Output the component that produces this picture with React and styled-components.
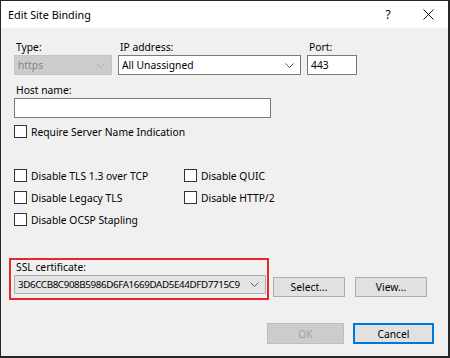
import React from 'react'
import styled, { createGlobalStyle } from 'styled-components'

const Global = createGlobalStyle`
body {
  margin: 0;
  background: #fff;
  font-family: "Noto Sans", "Liberation Sans", sans-serif;
}
`

const Window = styled.div`
width: 450px;
height: 358px;
box-sizing: border-box;
border: 1px solid #262626;
border-right-width: 2px;
border-bottom-width: 2px;
display: flex;
flex-direction: column;
background: #f0f0f0;
font-size: 10.3px;
color: #000;
`
const TitleBar = styled.div`
height: 27px;
flex: 0 0 27px;
background: #fff;
display: flex;
align-items: center;
padding-left: 7px;
font-size: 10.8px;
`
const Title = styled.div`
flex: 1;
`
const Caption = styled.div`
width: 40px;
height: 27px;
display: flex;
align-items: center;
justify-content: center;
font-size: 12px;
`
const Body = styled.div`
flex: 1;
padding: 12px 14px 0 13px;
display: flex;
flex-direction: column;
`
const TopRow = styled.div`
display: grid;
grid-template-columns: 98px 183px 50px;
column-gap: 6px;
`
const Field = styled.div`
display: flex;
flex-direction: column;
margin-top: ${p => p.$top || 0}px;
width: ${p => p.$w ? p.$w + 'px' : 'auto'};
`
const Label = styled.div`
height: 15px;
line-height: 15px;
padding-left: 2px;
white-space: nowrap;
`
const Combo = styled.div`
box-sizing: border-box;
height: ${p => p.$h || 20}px;
display: flex;
align-items: center;
padding: 0 6px 0 3px;
border: 1px solid ${p => p.$disabled ? '#c4c4c4' : p.$list ? '#adadad' : '#7a7a7a'};
background: ${p => p.$disabled ? '#cccccc' : p.$list ? '#e5e5e5' : '#fff'};
color: ${p => p.$disabled ? '#858585' : '#000'};
`
const ComboText = styled.div`
flex: 1;
white-space: nowrap;
overflow: hidden;
font-size: ${p => p.$tight ? '9.8px' : 'inherit'};
letter-spacing: ${p => p.$tight ? '-0.38px' : 'normal'};
`
const TextBox = styled.div`
box-sizing: border-box;
height: 20px;
width: ${p => p.$w ? p.$w + 'px' : 'auto'};
border: 1px solid #7a7a7a;
background: #fff;
padding-left: 3px;
line-height: 18px;
`
const CheckRow = styled.label`
display: flex;
align-items: center;
height: 15px;
gap: 4px;
width: ${p => p.$w ? p.$w + 'px' : 'auto'};
margin-top: ${p => p.$top || 0}px;
`
const Box = styled.span`
box-sizing: border-box;
width: 13px;
height: 13px;
border: 1px solid #333;
background: #fff;
`
const CheckGrid = styled.div`
display: grid;
grid-template-columns: 170px 170px;
row-gap: 7px;
margin-top: 29px;
`
const SslRow = styled.div`
display: flex;
align-items: flex-end;
margin-top: 31px;
margin-left: -5px;
`
const SslBox = styled.div`
width: 252px;
padding: 0 1px 4px 3px;
border: 2px solid #e8262b;
`
const Button = styled.div`
box-sizing: border-box;
width: ${p => p.$w}px;
height: ${p => p.$h || 20}px;
margin-left: ${p => p.$gap || 0}px;
margin-bottom: ${p => p.$bottom || 0}px;
display: flex;
align-items: center;
justify-content: center;
background: ${p => p.$disabled ? '#cccccc' : '#e1e1e1'};
border: ${p => p.$default ? '2px solid #0078d7' : p.$disabled ? '1px solid #bfbfbf' : '1px solid #adadad'};
color: ${p => p.$disabled ? '#a3a3a3' : '#000'};
`
const Footer = styled.div`
display: flex;
justify-content: flex-end;
margin-top: 23px;
`

const Chevron = ({ color = '#5a5a5a' }) => (
  <svg width="9" height="5" viewBox="0 0 9 5">
    <polyline points="0.5,0.5 4.5,4.5 8.5,0.5" fill="none" stroke={color} strokeWidth="1" />
  </svg>
)

const Check = ({ children, w, top }) => (
  <CheckRow $w={w} $top={top}>
    <Box />
    <span>{children}</span>
  </CheckRow>
)

export default function App() {
  return (
    <>
      <Global />
      <Window>
        <TitleBar>
          <Title>Edit Site Binding</Title>
          <Caption>?</Caption>
          <Caption>
            <svg width="11" height="11" viewBox="0 0 11 11">
              <path d="M0.5 0.5 L10.5 10.5 M10.5 0.5 L0.5 10.5" stroke="#111" strokeWidth="1" />
            </svg>
          </Caption>
        </TitleBar>
        <Body>
          <TopRow>
            <Field>
              <Label>Type:</Label>
              <Combo $disabled>
                <ComboText>https</ComboText>
                <Chevron color="#a8a8a8" />
              </Combo>
            </Field>
            <Field>
              <Label>IP address:</Label>
              <Combo>
                <ComboText>All Unassigned</ComboText>
                <Chevron />
              </Combo>
            </Field>
            <Field>
              <Label>Port:</Label>
              <TextBox>443</TextBox>
            </Field>
          </TopRow>
          <Field $top={8} $w={257}>
            <Label>Host name:</Label>
            <TextBox />
          </Field>
          <Check top={6}>Require Server Name Indication</Check>
          <CheckGrid>
            <Check>Disable TLS 1.3 over TCP</Check>
            <Check>Disable QUIC</Check>
            <Check>Disable Legacy TLS</Check>
            <Check>Disable HTTP/2</Check>
            <Check>Disable OCSP Stapling</Check>
          </CheckGrid>
          <SslRow>
            <SslBox>
              <Label>SSL certificate:</Label>
              <Combo $list $h={19}>
                <ComboText $tight>3D6CCB8C908B5986D6FA1669DAD5E44DFD7715C9</ComboText>
                <Chevron />
              </Combo>
            </SslBox>
            <Button $w={72} $gap={4} $bottom={3}>Select...</Button>
            <Button $w={72} $gap={10} $bottom={3}>View...</Button>
          </SslRow>
          <Footer>
            <Button $w={77} $h={21} $disabled>OK</Button>
            <Button $w={81} $h={21} $gap={9} $default>Cancel</Button>
          </Footer>
        </Body>
      </Window>
    </>
  )
}
